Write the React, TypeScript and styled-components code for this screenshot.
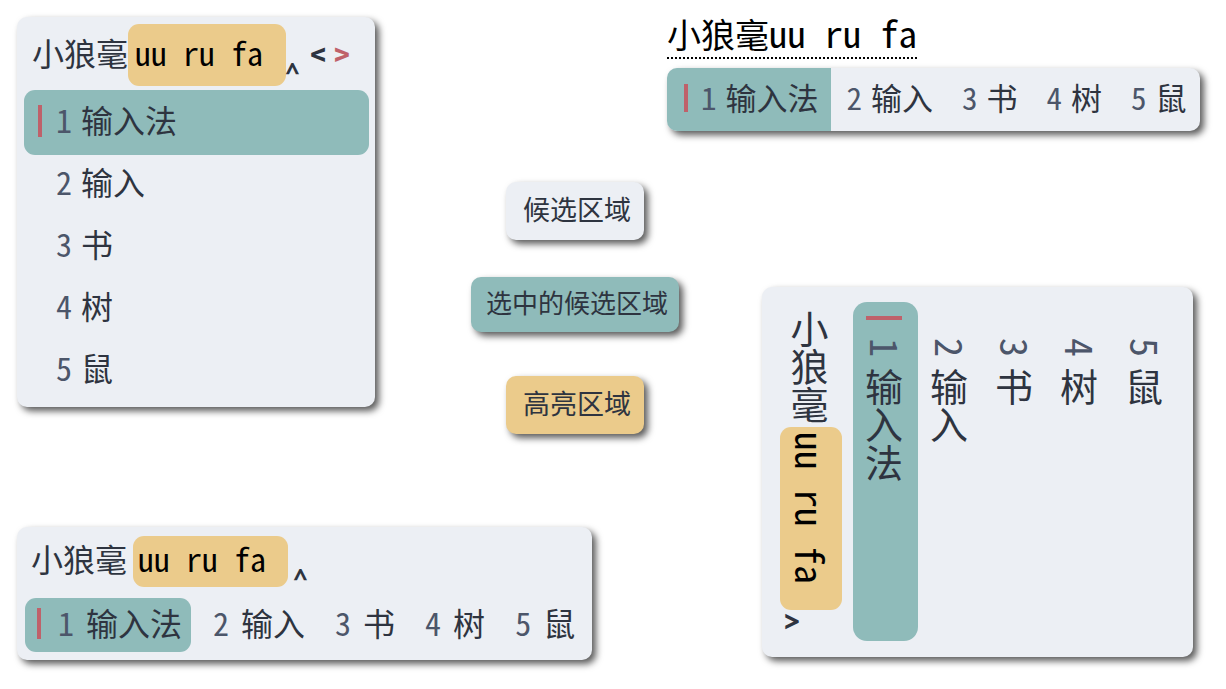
import React from "react";
import styled, { createGlobalStyle, css } from "styled-components";

const color = {
  panel: "#eceff4",
  selected: "#8fbbba",
  highlight: "#ebcb8b",
  text: "#2e3440",
  label: "#4c566a",
  accent: "#bf616a",
};

const GlobalStyle = createGlobalStyle`
  * { box-sizing: border-box; }
  body {
    margin: 0;
    background: #ffffff;
    color: ${color.text};
    font-family: "Noto Sans Mono CJK SC", "Noto Sans CJK SC", sans-serif;
  }
`;

const raised = css`
  border-radius: 10px;
  box-shadow: 4px 4px 7px rgba(0, 0, 0, 0.65);
`;

const Page = styled.main`
  display: grid;
  grid-template-columns:
    minmax(0, 454fr) minmax(0, 196fr) minmax(0, 12fr)
    minmax(0, 521fr);
  grid-template-rows: 165px minmax(345px, auto) auto;
  align-items: start;
  justify-items: start;
  padding: 17px 26px 28px 17px;
`;

const StackedArea = styled.div`
  grid-area: 1 / 1 / 3 / 2;
`;

const InlineArea = styled.div`
  grid-area: 3 / 1 / 4 / 3;
`;

const LegendArea = styled.div`
  grid-area: 2 / 2 / 3 / 4;
  justify-self: center;
`;

const EmbeddedArea = styled.div`
  grid-area: 1 / 3 / 2 / 5;
`;

const VerticalArea = styled.div`
  grid-area: 2 / 4 / 4 / 5;
  align-self: end;
  justify-self: end;
  margin-right: 7px;
  margin-bottom: 3px;
`;

type Mode = "stacked" | "inline" | "embedded" | "vertical";

const panelModes = {
  stacked: css`
    inline-size: 358px;
    padding: 7px 6px 6px 7px;
    font-size: 32px;
  `,
  inline: css`
    padding: 9px 9px 8px 8px;
    font-size: 32px;
  `,
  embedded: css`
    overflow: hidden;
    font-size: 31px;
  `,
  vertical: css`
    display: flex;
    flex-direction: column;
    gap: 11px;
    writing-mode: vertical-lr;
    inline-size: 370px;
    padding: 15px 15px 16px 18px;
    font-size: 38px;
  `,
};

const Panel = styled.section<{ $mode: Mode }>`
  background: ${color.panel};
  line-height: 1;
  white-space: nowrap;
  ${raised}
  ${(p) => panelModes[p.$mode]}
`;

const preeditModes = {
  stacked: css`
    block-size: 62px;
    padding-inline-start: 8px;
    margin-block-end: 6px;
  `,
  inline: css`
    block-size: 51px;
    padding-inline-start: 6px;
    margin-block-end: 11px;
  `,
  embedded: css``,
  vertical: css`
    block-size: 62px;
    padding-inline-start: 8px;
  `,
};

const Preedit = styled.div<{ $mode: Mode }>`
  display: flex;
  align-items: center;
  ${(p) => preeditModes[p.$mode]}
`;

const codeModes = {
  stacked: css`
    inline-size: 158px;
    padding: 0 0 7px 7px;
  `,
  inline: css`
    inline-size: 155px;
    margin-inline: 6px;
    padding: 0 0 7px 5px;
  `,
  embedded: css``,
  vertical: css`
    inline-size: 183px;
    margin-inline: 3px 4px;
    padding-inline-start: 5px;
  `,
};

const Code = styled.mark<{ $mode: Mode }>`
  display: flex;
  align-items: center;
  block-size: 100%;
  border-radius: 11px;
  background: ${color.highlight};
  color: #000000;
  ${(p) => codeModes[p.$mode]}
`;

const Hanzi = styled.span<{ $mode: Mode }>`
  padding-block-end: ${(p) => (p.$mode === "vertical" ? 4 : 7)}px;
`;

const Label = styled.span<{ $mode: Mode }>`
  padding-block-end: ${(p) => (p.$mode === "vertical" ? 0 : 7)}px;
  color: ${color.label};
`;

const Caret = styled.span<{ $mode: Mode }>`
  inline-size: 16px;
  padding-block-end: ${(p) => (p.$mode === "vertical" ? 0 : 7)}px;
  font-weight: 700;
`;

const Pager = styled.nav`
  display: flex;
  gap: 8px;
  margin-inline-start: 8px;
  padding-block-end: 4px;
`;

const PagerButton = styled.button<{ $active?: boolean }>`
  inline-size: 16px;
  padding: 0;
  border: 0;
  background: none;
  color: ${(p) => (p.$active ? color.accent : color.text)};
  font: inherit;
  font-weight: 700;
  cursor: pointer;
`;

const listModes = {
  stacked: css`
    flex-direction: column;
  `,
  inline: css`
    gap: 15px;
  `,
  embedded: css``,
  vertical: css`
    flex-direction: column;
  `,
};

const List = styled.ol<{ $mode: Mode }>`
  display: flex;
  margin: 0;
  padding: 0;
  list-style: none;
  ${(p) => listModes[p.$mode]}
`;

const candidateModes = {
  stacked: css<{ $selected: boolean }>`
    inline-size: 100%;
    block-size: ${(p) => (p.$selected ? 65 : 62)}px;
    margin-block: ${(p) => (p.$selected ? -2 : 0)}px;
    padding-inline-start: ${(p) => (p.$selected ? 14 : 32)}px;
    gap: 9px;
    border-radius: 11px;
  `,
  inline: css<{ $selected: boolean }>`
    block-size: 54px;
    padding-inline: ${(p) => (p.$selected ? "12px 9px" : "7px 8px")};
    gap: 12px;
    border-radius: 11px;
  `,
  embedded: css<{ $selected: boolean }>`
    block-size: 63px;
    padding-inline: ${(p) => (p.$selected ? "17px 12px" : "16px 13px")};
    gap: 9px;
  `,
  vertical: css<{ $selected: boolean }>`
    inline-size: 100%;
    block-size: 65px;
    padding-inline-start: ${(p) => (p.$selected ? 14 : 36)}px;
    gap: 11px;
    border-radius: 14px;
  `,
};

const Candidate = styled.button<{ $mode: Mode; $selected: boolean }>`
  display: flex;
  align-items: center;
  padding: 0;
  border: 0;
  writing-mode: inherit;
  background: ${(p) => (p.$selected ? color.selected : "transparent")};
  color: ${color.text};
  font: inherit;
  cursor: pointer;
  ${(p) => candidateModes[p.$mode]}
`;

const markModes = {
  stacked: css`
    block-size: 32px;
    margin-inline-end: 5px;
  `,
  inline: css`
    block-size: 31px;
    margin-inline-end: 5px;
  `,
  embedded: css`
    block-size: 28px;
    margin-inline-end: 4px;
  `,
  vertical: css`
    block-size: 36px;
    margin-inline-end: 7px;
  `,
};

const Mark = styled.span<{ $mode: Mode }>`
  inline-size: 4px;
  margin-block-end: 4px;
  background: ${color.accent};
  ${(p) => markModes[p.$mode]}
`;

const Composition = styled.div`
  display: flex;
  align-items: baseline;
  width: max-content;
  height: 42px;
  margin-bottom: 9px;
  border-bottom: 2px dotted #000000;
  color: #000000;
  font-size: 34px;
  line-height: 30px;
  white-space: pre;
`;

const CompositionCode = styled.span`
  font-size: 37px;
`;

const Legend = styled.ul`
  display: flex;
  flex-direction: column;
  align-items: center;
  margin: 0;
  padding: 0;
  list-style: none;
`;

const LegendItem = styled.li<{ $background: string; $compact?: boolean }>`
  margin-block: ${(p) => (p.$compact ? "37px 44px" : "0")};
  padding: ${(p) => (p.$compact ? "11px 11px 16px 15px" : "13px 13px 17px 17px")};
  background: ${(p) => p.$background};
  font-size: ${(p) => (p.$compact ? 26 : 27)}px;
  line-height: 28px;
  white-space: nowrap;
  ${raised}
`;

const words = ["输入法", "输入", "书", "树", "鼠"];

function Candidates({ mode }: { mode: Mode }) {
  return (
    <List $mode={mode}>
      {words.map((word, i) => (
        <li key={word}>
          <Candidate type="button" $mode={mode} $selected={i === 0}>
            {i === 0 && <Mark $mode={mode} />}
            <Label $mode={mode}>{i + 1}</Label>
            <Hanzi $mode={mode}>{word}</Hanzi>
          </Candidate>
        </li>
      ))}
    </List>
  );
}

function InputWindow({ mode, paged }: { mode: Mode; paged?: boolean }) {
  return (
    <Panel $mode={mode}>
      {mode !== "embedded" && (
        <Preedit $mode={mode}>
          <Hanzi $mode={mode}>小狼毫</Hanzi>
          <Code $mode={mode}>uu ru fa</Code>
          <Caret $mode={mode}>‸</Caret>
          {paged && (
            <Pager>
              <PagerButton type="button">&lt;</PagerButton>
              <PagerButton type="button" $active>
                &gt;
              </PagerButton>
            </Pager>
          )}
        </Preedit>
      )}
      <Candidates mode={mode} />
    </Panel>
  );
}

export default function App() {
  return (
    <>
      <GlobalStyle />
      <Page>
        <StackedArea>
          <InputWindow mode="stacked" paged />
        </StackedArea>
        <EmbeddedArea>
          <Composition>
            小狼毫<CompositionCode>uu ru fa</CompositionCode>
          </Composition>
          <InputWindow mode="embedded" />
        </EmbeddedArea>
        <LegendArea>
          <Legend>
            <LegendItem $background={color.panel}>候选区域</LegendItem>
            <LegendItem $background={color.selected} $compact>
              选中的候选区域
            </LegendItem>
            <LegendItem $background={color.highlight}>高亮区域</LegendItem>
          </Legend>
        </LegendArea>
        <VerticalArea>
          <InputWindow mode="vertical" />
        </VerticalArea>
        <InlineArea>
          <InputWindow mode="inline" />
        </InlineArea>
      </Page>
    </>
  );
}
